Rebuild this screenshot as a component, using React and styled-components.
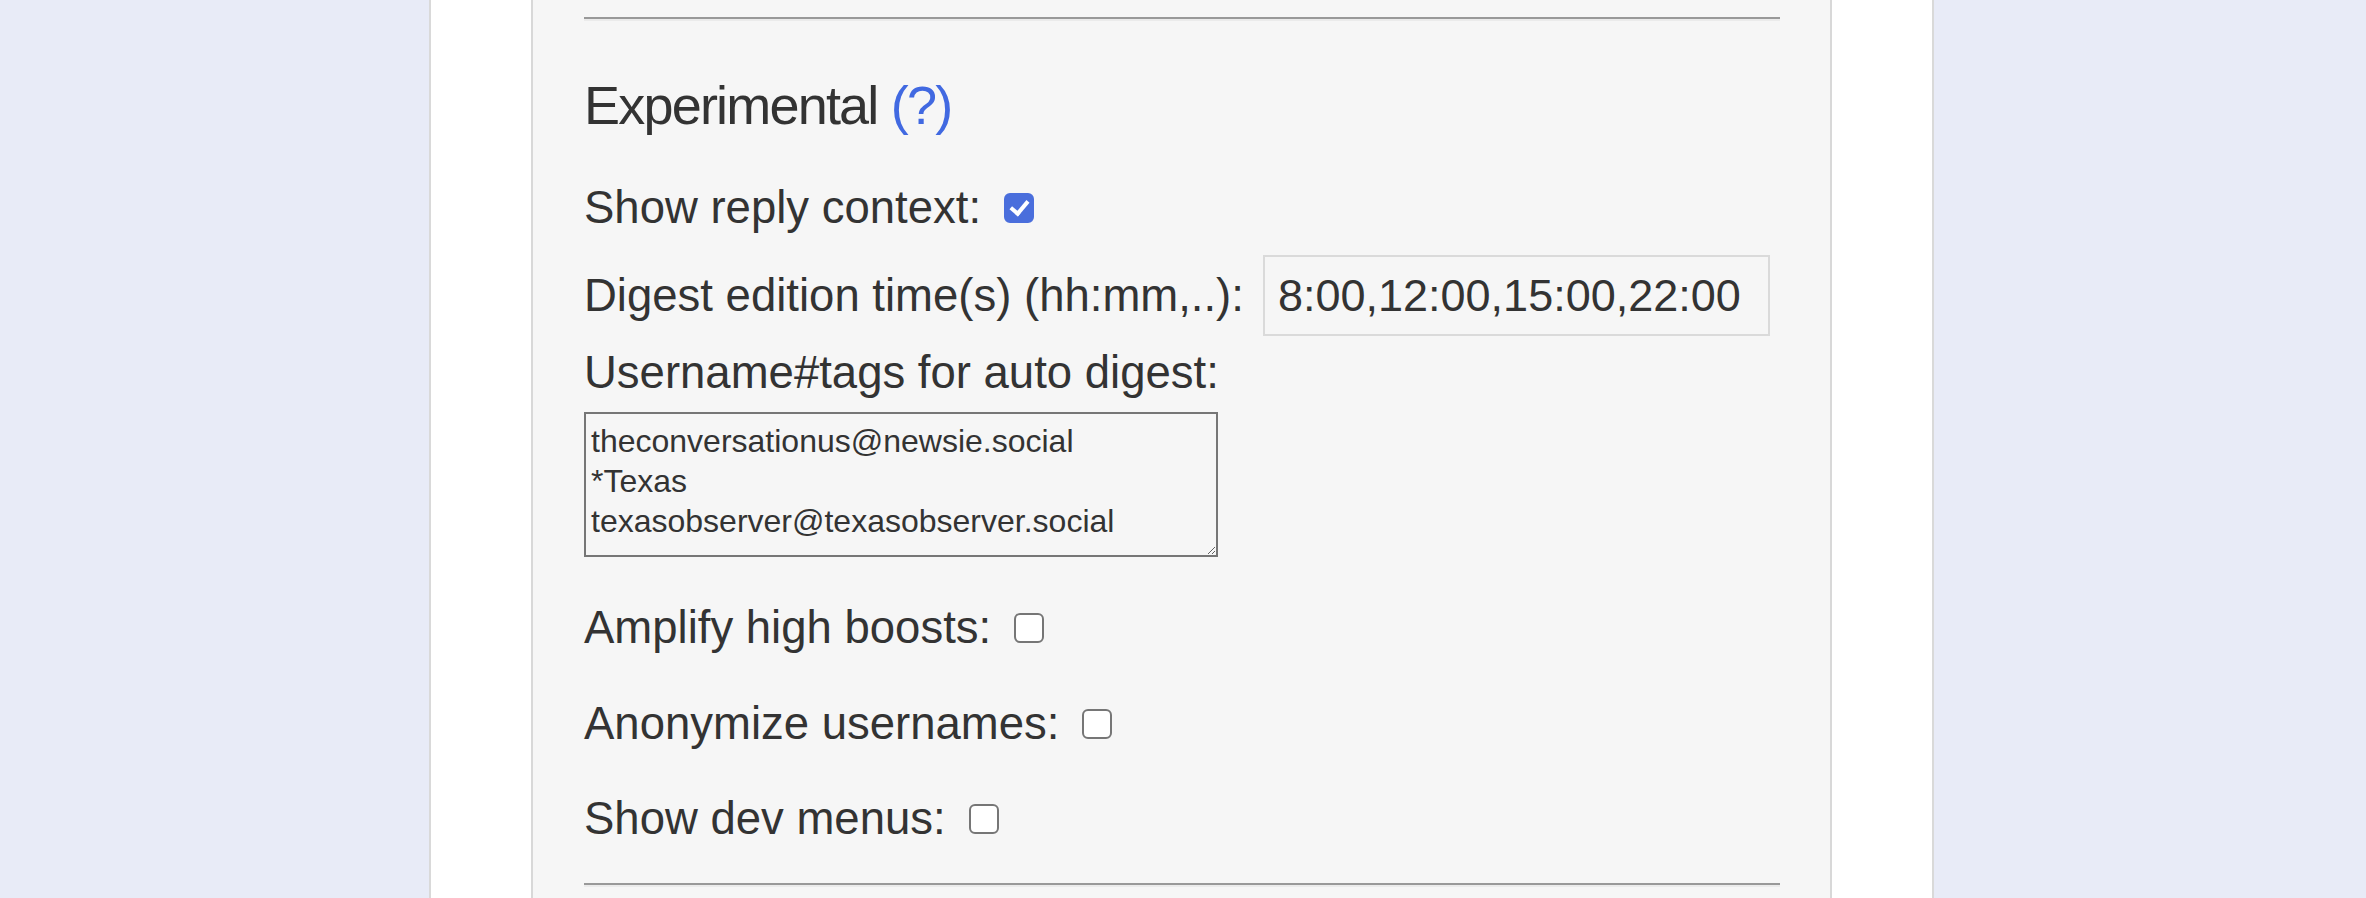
import styled, { createGlobalStyle } from "styled-components";
import { useState } from "react";

const GlobalStyle = createGlobalStyle`
  body {
    margin: 0;
    padding-right: 3px;
    background: #e8ebf7;
    color: #333;
    font-family: "Liberation Sans", Arial, sans-serif;
  }
`;

function App() {
  const [replyContext, setReplyContext] = useState(true);
  const [amplify, setAmplify] = useState(false);
  const [anonymize, setAnonymize] = useState(false);
  const [devMenus, setDevMenus] = useState(false);

  return (
    <>
      <GlobalStyle />
      <Page>
        <Panel>
          <Rule />
          <Heading>
            Experimental <HelpLink href="#">(?)</HelpLink>
          </Heading>

          <Row $gap={46}>
            Show reply context:
            <Checkbox
              type="checkbox"
              checked={replyContext}
              onChange={(e) => setReplyContext(e.target.checked)}
            />
          </Row>

          <Row $gap={21}>
            Digest edition time(s) (hh:mm,..):
            <TimeInput type="text" defaultValue="8:00,12:00,15:00,22:00" />
          </Row>

          <Row $gap={11}>Username#tags for auto digest:</Row>
          <TagsArea
            defaultValue={
              "theconversationus@newsie.social\n*Texas\ntexasobserver@texasobserver.social"
            }
          />

          <Row $gap={45}>
            Amplify high boosts:
            <Checkbox
              type="checkbox"
              checked={amplify}
              onChange={(e) => setAmplify(e.target.checked)}
            />
          </Row>
          <Row $gap={44}>
            Anonymize usernames:
            <Checkbox
              type="checkbox"
              checked={anonymize}
              onChange={(e) => setAnonymize(e.target.checked)}
            />
          </Row>
          <Row $gap={43}>
            Show dev menus:
            <Checkbox
              type="checkbox"
              checked={devMenus}
              onChange={(e) => setDevMenus(e.target.checked)}
            />
          </Row>

          <Rule $gap={38} />
        </Panel>
      </Page>
    </>
  );
}

export default App;

const Page = styled.div`
  box-sizing: border-box;
  width: 1505px;
  min-height: 100vh;
  margin: 0 auto;
  padding: 0 100px;
  background: #fff;
  border-left: 2px solid #d9d9d9;
  border-right: 2px solid #d9d9d9;
`;

const Panel = styled.div`
  box-sizing: border-box;
  min-height: 100vh;
  padding: 17px 50px 0 51px;
  background: #f6f6f6;
  border-left: 2px solid #d8d8d8;
  border-right: 2px solid #d8d8d8;
`;

const Rule = styled.hr`
  height: 0;
  margin: ${(p) => p.$gap || 0}px 0 0;
  border: none;
  border-top: 2px solid #999;
  border-bottom: 2px solid #ebebeb;
`;

const Heading = styled.h2`
  margin: 53px 0 0;
  font-size: 54px;
  line-height: 62px;
  font-weight: normal;
  letter-spacing: -1.8px;
`;

const HelpLink = styled.a`
  color: #4169e1;
  text-decoration: none;
`;

const Row = styled.label`
  display: flex;
  align-items: center;
  margin-top: ${(p) => p.$gap}px;
  font-size: 45.5px;
  line-height: 52px;
  white-space: pre;
`;

const Checkbox = styled.input`
  appearance: none;
  box-sizing: border-box;
  display: grid;
  place-content: center;
  width: 30px;
  height: 30px;
  margin: 0 0 0 23px;
  background: #fff;
  border: 2px solid #767676;
  border-radius: 6px;

  &:checked {
    background: #4a6edc;
    border-color: #4a6edc;
  }

  &:checked::after {
    content: "";
    width: 7px;
    height: 14px;
    margin-top: -4px;
    border: solid #fff;
    border-width: 0 4px 4px 0;
    transform: rotate(40deg);
  }
`;

const TimeInput = styled.input`
  box-sizing: border-box;
  width: 507px;
  height: 81px;
  margin-left: 19px;
  padding: 0 13px;
  background: transparent;
  border: 2px solid #dadada;
  color: #333;
  font-family: inherit;
  font-size: 45px;
`;

const TagsArea = styled.textarea`
  display: block;
  box-sizing: border-box;
  width: 634px;
  height: 145px;
  margin-top: 13px;
  padding: 7px 5px;
  background: transparent;
  border: 2px solid #767676;
  color: #333;
  font-family: "Liberation Sans", Arial, sans-serif;
  font-size: 32px;
  line-height: 40px;
`;
